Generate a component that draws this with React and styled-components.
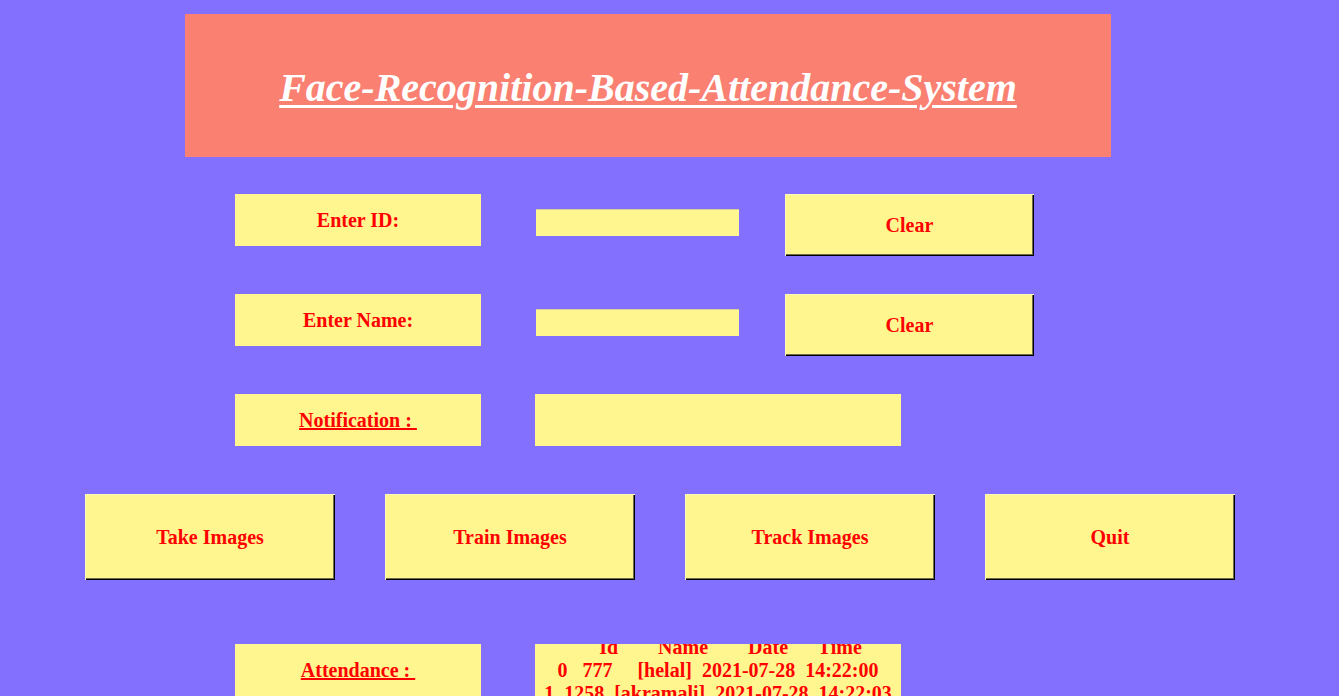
import styled, { createGlobalStyle } from "styled-components";

const GlobalStyle = createGlobalStyle`
  html, body {
    margin: 0;
    padding: 0;
    background: #8470ff;
    overflow: hidden;
  }
  body {
    font-family: "Liberation Serif", "Times New Roman", serif;
  }
`;

const attendance = [
  "     Id        Name        Date      Time",
  "0   777     [helal]  2021-07-28  14:22:00",
  "1  1258  [akramali]  2021-07-28  14:22:03",
].join("\n");

const App = () => {
  return (
    <Window>
      <GlobalStyle />
      <Header>
        <Title>Face-Recognition-Based-Attendance-System</Title>
      </Header>

      <FormRow $top={37}>
        <LabelBox>Enter ID:</LabelBox>
        <FieldCell>
          <Entry />
        </FieldCell>
        <RaisedButton $w={249} $h={62}>Clear</RaisedButton>
      </FormRow>

      <FormRow $top={38}>
        <LabelBox>Enter Name:</LabelBox>
        <FieldCell>
          <Entry />
        </FieldCell>
        <RaisedButton $w={249} $h={62}>Clear</RaisedButton>
      </FormRow>

      <FormRow $top={38}>
        <LabelBox>
          <Underlined>Notification : </Underlined>
        </LabelBox>
        <MessageBox />
      </FormRow>

      <ActionRow>
        <RaisedButton $w={250} $h={86}>Take Images</RaisedButton>
        <RaisedButton $w={250} $h={86}>Train Images</RaisedButton>
        <RaisedButton $w={250} $h={86}>Track Images</RaisedButton>
        <RaisedButton $w={250} $h={86}>Quit</RaisedButton>
      </ActionRow>

      <FormRow $top={64}>
        <LabelBox>
          <Underlined>Attendance : </Underlined>
        </LabelBox>
        <MessageBox>
          <TableText>{attendance}</TableText>
        </MessageBox>
      </FormRow>
    </Window>
  );
};

const Window = styled.div`
  width: 1339px;
  height: 696px;
  padding-top: 14px;
  box-sizing: border-box;
  overflow: hidden;
`;

const Header = styled.div`
  margin-left: 185px;
  width: 926px;
  height: 143px;
  background: #fa8072;
  display: flex;
  align-items: center;
  justify-content: center;
`;

const Title = styled.h1`
  margin: 0;
  margin-top: 3px;
  color: #ffffff;
  font-size: 40px;
  font-weight: bold;
  font-style: italic;
  text-decoration: underline;
  text-decoration-thickness: 3px;
  text-underline-offset: 4px;
`;

const FormRow = styled.div`
  display: flex;
  align-items: flex-start;
  padding-left: 235px;
  margin-top: ${(p) => p.$top}px;
`;

const LabelBox = styled.div`
  width: 246px;
  height: 52px;
  margin-right: 54px;
  background: #fff68f;
  color: #ff0000;
  font-size: 20px;
  font-weight: bold;
  display: flex;
  align-items: center;
  justify-content: center;
`;

const Underlined = styled.span`
  text-decoration: underline;
  text-decoration-thickness: 2px;
  white-space: pre;
`;

const FieldCell = styled.div`
  width: 250px;
  padding-top: 15px;
`;

const Entry = styled.div`
  width: 203px;
  height: 27px;
  margin-left: 1px;
  background: #fff68f;
  box-shadow: inset 0 1px 0 #d8cf95;
`;

const MessageBox = styled.div`
  width: 366px;
  height: 52px;
  background: #fff68f;
  overflow: hidden;
  display: flex;
  align-items: center;
  justify-content: center;
`;

const TableText = styled.pre`
  margin: 0;
  flex-shrink: 0;
  font-family: "Liberation Serif", "Times New Roman", serif;
  font-size: 20px;
  line-height: 23px;
  font-weight: bold;
  color: #ff0000;
  text-align: center;
`;

const ActionRow = styled.div`
  display: flex;
  gap: 50px;
  padding-left: 85px;
  margin-top: 48px;
`;

const RaisedButton = styled.button`
  width: ${(p) => p.$w}px;
  height: ${(p) => p.$h}px;
  padding: 0;
  border: none;
  background: #fff68f;
  color: #ff0000;
  font-family: "Liberation Serif", "Times New Roman", serif;
  font-size: 20px;
  font-weight: bold;
  box-shadow: inset 1px 1px 0 #fff9b8, inset -1px -1px 0 #000000,
    inset -2px -2px 0 #6e6a4a;
  cursor: pointer;
`;

export default App;
